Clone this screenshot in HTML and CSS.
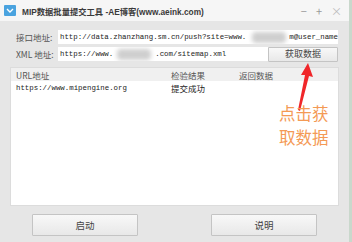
FILE: index.html
```html
<!DOCTYPE html>
<html lang="zh">
<head>
    <meta charset="UTF-8">
    <title>MIP数据批量提交工具</title>
    <link rel="stylesheet" href="styles.css">
</head>
<body>
    <div class="screen">
        <div class="window">
            <div class="titlebar">
                <svg class="logo" width="12" height="11" viewBox="0 0 12 11">
                    <rect width="12" height="11" rx="1" fill="#4aa3df"/>
                    <path d="M3 4 L6 7 L9 4" stroke="#fff" stroke-width="1.4" fill="none"/>
                </svg>
                <span class="title">MIP数据批量提交工具 -AE博客(www.aeink.com)</span>
                <div class="controls">
                    <span>&minus;</span>
                    <span>+</span>
                    <span class="close">&times;</span>
                </div>
            </div>

            <div class="content">
                <div class="row">
                    <label class="label">接口地址:</label>
                    <div class="field wide">http://data.zhanzhang.sm.cn/push?site=www.<span class="blur b1"></span>m@user_name</div>
                </div>
                <div class="row">
                    <label class="label">XML 地址:</label>
                    <div class="field">https://www.<span class="blur b2"></span>.com/sitemap.xml</div>
                    <button class="btn fetch">获取数据</button>
                </div>

                <div class="list">
                    <div class="list-head">
                        <span class="col url">URL地址</span>
                        <span class="col res">检验结果</span>
                        <span class="col ret">返回数据</span>
                    </div>
                    <div class="list-row">
                        <span class="col url mono">https://www.mipengine.org</span>
                        <span class="col res">提交成功</span>
                        <span class="col ret"></span>
                    </div>
                    <svg class="arrow" width="24" height="50" viewBox="0 0 24 50">
                        <path d="M16 0 L21 14 L17 13 L8 48 L6 47 L13 12 L9 12 Z" fill="#f0262a"/>
                    </svg>
                    <div class="note">
                        <div>点击获</div>
                        <div>取数据</div>
                    </div>
                </div>

                <div class="actions">
                    <button class="btn big">启动</button>
                    <button class="btn big">说明</button>
                </div>
            </div>
        </div>
        <div class="edge"></div>
    </div>
</body>
</html>
```

FILE: styles.css
```css
body {
    margin: 0;
    font-family: "Noto Sans CJK SC", "Liberation Sans", sans-serif;
    color: #333;
}
.screen {
    display: flex;
    width: 352px;
    height: 242px;
    overflow: hidden;
}
.window {
    width: 349px;
    background-color: #e6e6e6;
    display: flex;
    flex-direction: column;
}
.edge {
    flex: 1;
    background-color: #c9d8cc;
}
.titlebar {
    height: 21px;
    background-color: #f6f6f6;
    display: flex;
    align-items: center;
    padding: 0 3px 0 4px;
}
.logo {
    margin-right: 6px;
}
.title {
    font-family: "Liberation Sans", "Noto Sans CJK SC", sans-serif;
    font-weight: bold;
    font-size: 8.3px;
    color: #3a3a3a;
    flex: 1;
    white-space: nowrap;
}
.controls {
    display: flex;
    gap: 9px;
    color: #999;
    font-size: 11px;
    margin-right: 4px;
}
.close {
    color: #bbb;
}
.content {
    flex: 1;
    padding: 9px 10px 0 10px;
    display: flex;
    flex-direction: column;
}
.row {
    display: flex;
    align-items: center;
    height: 14px;
    margin-bottom: 3px;
}
.label {
    width: 42px;
    padding-left: 6px;
    font-size: 8.5px;
    color: #555;
    white-space: nowrap;
}
.field {
    height: 14px;
    box-sizing: border-box;
    width: 210px;
    background-color: #fff;
    font-family: "Liberation Mono", monospace;
    font-size: 7.4px;
    line-height: 14px;
    padding-left: 2px;
    white-space: nowrap;
    overflow: hidden;
    display: flex;
    align-items: center;
    color: #222;
}
.field.wide {
    width: 280px;
}
.blur {
    display: inline-block;
    height: 11px;
    background-color: #cfcfcf;
    border-radius: 4px;
    filter: blur(2px);
}
.b1 {
    width: 40px;
    margin: 0 3px 0 6px;
}
.b2 {
    width: 34px;
    margin: 0 4px;
}
.btn {
    font-family: "Noto Sans CJK SC", sans-serif;
    background: linear-gradient(#f8f8f8, #e8e8e8);
    border: 1px solid #c4c4c4;
    border-radius: 1px;
    color: #444;
    padding: 0;
    cursor: pointer;
}
.fetch {
    width: 70px;
    height: 15px;
    font-size: 9px;
    line-height: 12px;
}
.list {
    position: relative;
    margin-top: 3px;
    height: 137px;
    background-color: #fff;
    border: 1px solid #dcdcdc;
}
.list-head {
    display: flex;
    height: 13px;
    align-items: center;
    background-color: #f0f0f0;
    font-size: 8.5px;
    color: #555;
}
.list-row {
    display: flex;
    height: 14px;
    align-items: center;
    font-size: 8.5px;
    color: #222;
}
.col.url {
    width: 155px;
    padding-left: 5px;
}
.col.res {
    width: 68px;
}
.mono {
    font-family: "Liberation Mono", monospace;
    font-size: 7.4px;
}
.arrow {
    position: absolute;
    left: 281px;
    top: -5px;
}
.note {
    position: absolute;
    left: 268px;
    top: 33px;
    font-size: 16.5px;
    line-height: 24px;
    color: #f49a55;
}
.actions {
    display: flex;
    gap: 73px;
    padding: 8px 0 0 22px;
}
.big {
    width: 106px;
    height: 22px;
    font-size: 9.5px;
}
```
